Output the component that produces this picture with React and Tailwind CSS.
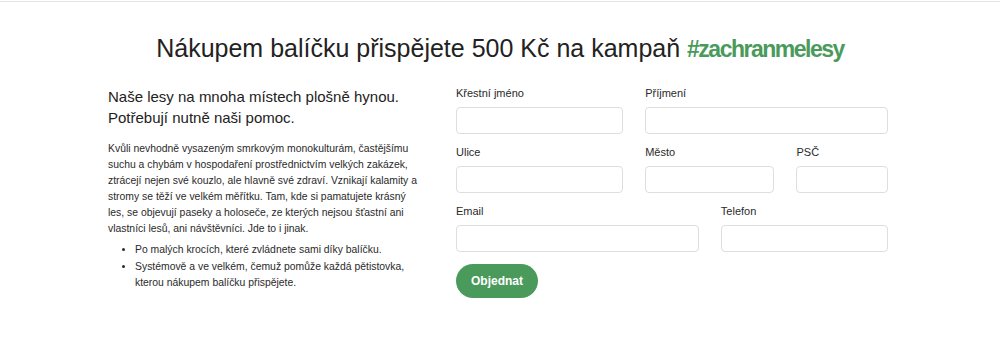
import React from "react"

const font = { fontFamily: '"Liberation Sans", Arial, sans-serif' }

function Field({ label, span }) {
  return (
    <label className={`flex flex-col ${span}`}>
      <span className="h-[14px] text-[11px] leading-[14px] text-[#2a2a2a]">{label}</span>
      <input
        type="text"
        className="mt-[7px] h-[27px] w-full rounded-[4px] border border-[#dedede] bg-white outline-none"
      />
    </label>
  )
}

export default function App() {
  return (
    <div className="min-h-[341px] bg-white text-[#222]" style={font}>
      {/* linka nahoře */}
      <div className="h-px" />
      <div className="h-px bg-[#e4e4e4]" />

      <h1 className="mt-[30px] text-center text-[25px] leading-[32px] text-[#222]">
        Nákupem balíčku přispějete 500 Kč na kampaň{" "}
        <span className="text-[23px] font-bold tracking-[-1.5px] text-[#4a9a5c]">#zachranmelesy</span>
      </h1>

      <div className="mx-auto mt-[21px] flex w-[784px] gap-[18px]">
        {/* Levý sloupec s textem */}
        <div className="w-[330px] shrink-0">
          <h2 className="text-[15px] leading-[21px] text-[#222]">
            Naše lesy na mnoha místech plošně hynou.
            <br />
            Potřebují nutně naši pomoc.
          </h2>
          <p className="mt-[13px] whitespace-nowrap text-[10.4px] leading-[16px] text-[#2a2a2a]">
            Kvůli nevhodně vysazeným smrkovým monokulturám, častějšímu
            <br />
            suchu a chybám v hospodaření prostřednictvím velkých zakázek,
            <br />
            ztrácejí nejen své kouzlo, ale hlavně své zdraví. Vznikají kalamity a
            <br />
            stromy se těží ve velkém měřítku. Tam, kde si pamatujete krásný
            <br />
            les, se objevují paseky a holoseče, ze kterých nejsou šťastní ani
            <br />
            vlastníci lesů, ani návštěvníci. Jde to i jinak.
          </p>
          <ul className="mt-[5px] list-disc whitespace-nowrap pl-[27px] text-[10.4px] leading-[16.5px] text-[#2a2a2a]">
            <li>Po malých krocích, které zvládnete sami díky balíčku.</li>
            <li>
              Systémově a ve velkém, čemuž pomůže každá pětistovka,
              <br />
              kterou nákupem balíčku přispějete.
            </li>
          </ul>
        </div>

        {/* Formulář */}
        <form className="w-[432px]">
          <div className="grid grid-cols-12 gap-x-[22px] gap-y-[11px]">
            <Field label="Křestní jméno" span="col-span-5" />
            <Field label="Příjmení" span="col-span-7" />
            <Field label="Ulice" span="col-span-5" />
            <Field label="Město" span="col-span-4" />
            <Field label="PSČ" span="col-span-3" />
            <Field label="Email" span="col-span-7" />
            <Field label="Telefon" span="col-span-5" />
          </div>
          <button
            type="button"
            className="mt-[12px] h-[34px] w-[82px] rounded-full bg-[#4a9a5c] text-[12px] font-bold text-white"
          >
            Objednat
          </button>
        </form>
      </div>
    </div>
  )
}
